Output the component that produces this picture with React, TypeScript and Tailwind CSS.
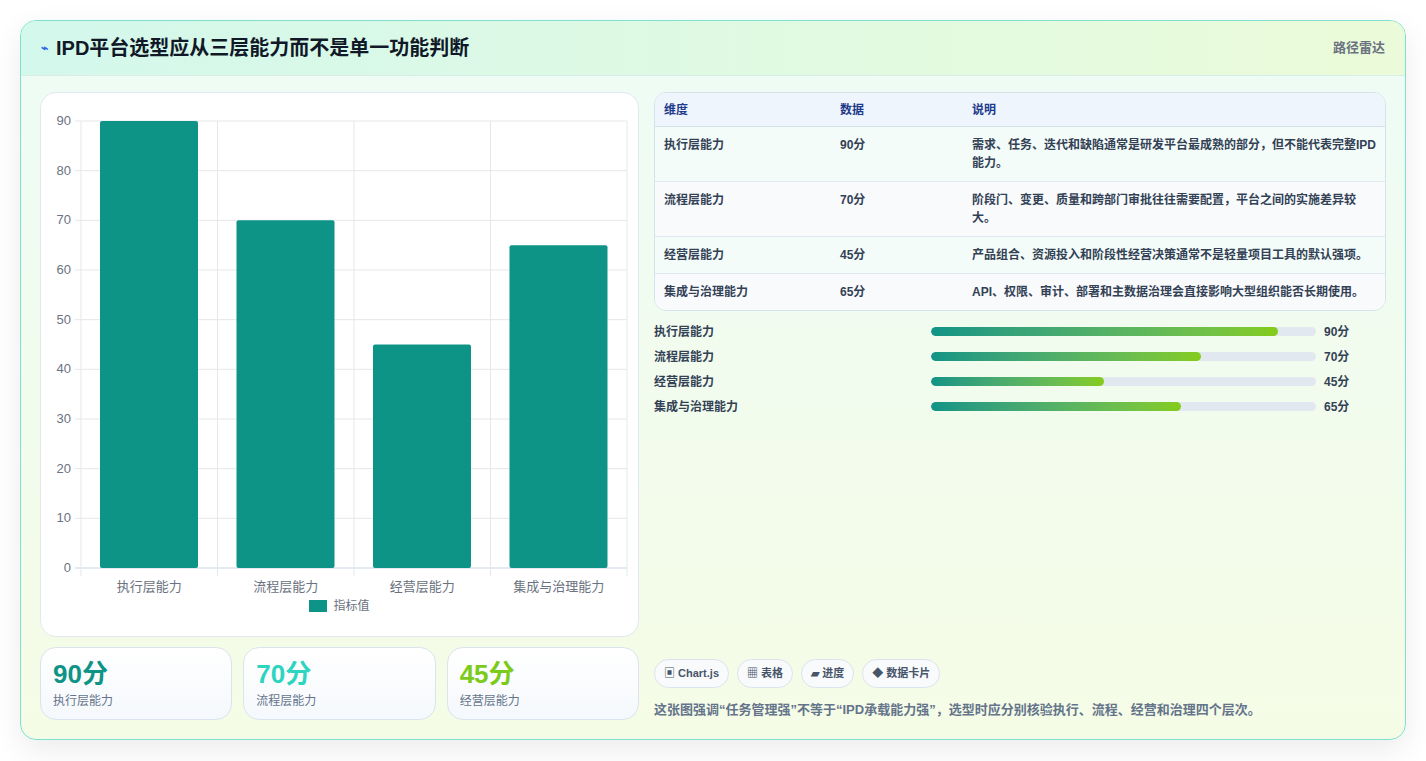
import React from "react";

const cats = ["执行层能力", "流程层能力", "经营层能力", "集成与治理能力"];
const vals = [90, 70, 45, 65];
const rows = [
  ["执行层能力", "90分", "需求、任务、迭代和缺陷通常是研发平台最成熟的部分，但不能代表完整IPD能力。"],
  ["流程层能力", "70分", "阶段门、变更、质量和跨部门审批往往需要配置，平台之间的实施差异较大。"],
  ["经营层能力", "45分", "产品组合、资源投入和阶段性经营决策通常不是轻量项目工具的默认强项。"],
  ["集成与治理能力", "65分", "API、权限、审计、部署和主数据治理会直接影响大型组织能否长期使用。"],
];

function Chart() {
  const x0 = 40, x1 = 586, yTop = 23, yBot = 470;
  const h = yBot - yTop;
  const cw = (x1 - x0) / 4;
  return (
    <svg width="598" height="500" className="block">
      {[0, 10, 20, 30, 40, 50, 60, 70, 80, 90].map((t) => {
        const y = yBot - (t / 90) * h;
        return (
          <g key={t}>
            <line x1={x0 - 6} x2={x1} y1={y} y2={y} stroke={t === 0 ? "#cbd5e1" : "#e5e7eb"} />
            <text x={x0 - 10} y={y + 4} textAnchor="end" fontSize="13" fill="#6b7280" fontFamily="Liberation Sans, sans-serif">{t}</text>
          </g>
        );
      })}
      {[0, 1, 2, 3, 4].map((i) => (
        <line key={i} x1={x0 + i * cw} x2={x0 + i * cw} y1={yTop} y2={yBot + 8} stroke="#e5e7eb" />
      ))}
      {vals.map((v, i) => {
        const bh = (v / 90) * h;
        return <rect key={i} x={x0 + i * cw + 19} y={yBot - bh} width={98} height={bh} rx="2" fill="#0e9486" />;
      })}
      {cats.map((c, i) => (
        <text key={c} x={x0 + i * cw + cw / 2} y={yBot + 23} textAnchor="middle" fontSize="13" fill="#6b7280" fontFamily="'Noto Sans CJK SC', sans-serif">{c}</text>
      ))}
    </svg>
  );
}

export default function App() {
  return (
    <div className="min-h-[761px] bg-white p-5 pb-0" style={{ fontFamily: "'Liberation Sans','Noto Sans CJK SC',sans-serif" }}>
      <div className="h-[720px] rounded-2xl border border-[#7ee0cf] shadow-[0_10px_30px_rgba(0,0,0,0.08)] overflow-hidden flex flex-col bg-gradient-to-b from-[#eefcf6] to-[#f5fce6]">
        <div className="h-[55px] flex items-center justify-between px-5 border-b border-[#d7efe6] bg-gradient-to-r from-[#d3f8ec] to-[#ebfbd9]">
          <div className="flex items-center gap-2">
            <span className="text-[#2563eb] text-xs font-bold">⌁</span>
            <span className="text-[20px] font-bold text-[#111827]">IPD平台选型应从三层能力而不是单一功能判断</span>
          </div>
          <span className="text-[13px] font-bold text-[#6b7280]">路径雷达</span>
        </div>
        <div className="flex gap-[15px] px-[19px] pt-4 flex-1">
          <div className="w-[599px] flex flex-col gap-[10px]">
            <div className="h-[545px] bg-white rounded-2xl border border-[#e2e8f0] pt-[5px]">
              <Chart />
              <div className="flex items-center justify-center gap-1.5 -mt-[1px]">
                <span className="w-[18px] h-[12px] bg-[#0e9486]" />
                <span className="text-[12px] text-[#6b7280]">指标值</span>
              </div>
            </div>
            <div className="grid grid-cols-3 gap-[11px]">
              {[["90分", "text-[#0e9486]", "执行层能力"], ["70分", "text-[#2dd4bf]", "流程层能力"], ["45分", "text-[#7ccb1a]", "经营层能力"]].map(([v, c, l]) => (
                <div key={l} className="h-[73px] rounded-2xl border border-[#dbe4ee] bg-gradient-to-b from-white to-[#f5f8fc] px-3 pt-[10px]">
                  <div className={`text-[26px] font-bold leading-[32px] ${c}`}>{v}</div>
                  <div className="text-[12px] text-[#64748b] mt-[2px]">{l}</div>
                </div>
              ))}
            </div>
          </div>
          <div className="flex-1 flex flex-col pr-0">
            <div className="rounded-xl border border-[#d6e2ea] overflow-hidden bg-white">
              <div className="flex h-[34px] items-center bg-[#eef5fd] border-b border-[#d6e2ea] text-[12px] font-bold text-[#1e3a8a]">
                <div className="w-[176px] pl-[9px]">维度</div>
                <div className="w-[132px] pl-[9px]">数据</div>
                <div className="flex-1 pl-[9px]">说明</div>
              </div>
              {rows.map((r, i) => (
                <div key={r[0]} className={`flex py-[9px] text-[12px] font-bold text-[#334155] leading-[18px] ${i < 3 ? "border-b border-[#e2e8f0]" : ""} ${i % 2 ? "bg-[#f8fafc]" : "bg-[#f3fcf8]"}`}>
                  <div className="w-[176px] pl-[9px]">{r[0]}</div>
                  <div className="w-[132px] pl-[9px]">{r[1]}</div>
                  <div className="flex-1 pl-[9px] pr-2">{r[2]}</div>
                </div>
              ))}
            </div>
            <div className="flex flex-col gap-[6px] mt-[11px]">
              {cats.map((c, i) => (
                <div key={c} className="flex items-center h-[19px] text-[12px] font-bold text-[#334155]">
                  <div className="w-[277px]">{c}</div>
                  <div className="w-[385px] h-[9px] rounded-full bg-[#e2e8f0] overflow-hidden">
                    <div className="h-full rounded-full bg-gradient-to-r from-[#0e9486] to-[#84cc16]" style={{ width: `${vals[i]}%` }} />
                  </div>
                  <div className="ml-2">{vals[i]}分</div>
                </div>
              ))}
            </div>
            <div className="mt-auto mb-[20px]">
              <div className="flex gap-2">
                {["▣ Chart.js", "▦ 表格", "▰ 进度", "◆ 数据卡片"].map((t) => (
                  <span key={t} className="h-[29px] flex items-center px-[9px] rounded-full border border-[#dbe4ee] bg-[#f8fafc] text-[11px] font-bold text-[#475569]">{t}</span>
                ))}
              </div>
              <div className="mt-[12px] text-[13px] font-bold text-[#64748b]">这张图强调“任务管理强”不等于“IPD承载能力强”，选型时应分别核验执行、流程、经营和治理四个层次。</div>
            </div>
          </div>
        </div>
      </div>
    </div>
  );
}
